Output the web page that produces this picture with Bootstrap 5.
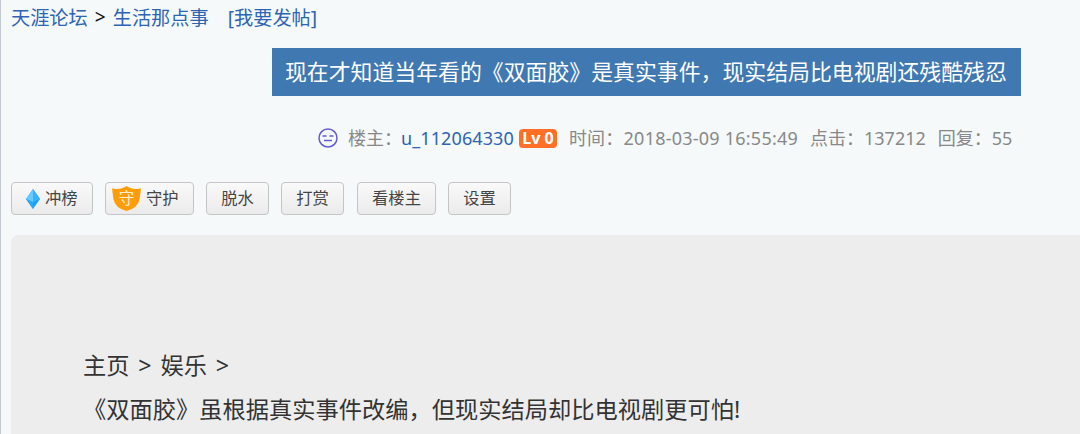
<!DOCTYPE html>
<html lang="zh-CN">
<head>
    <meta charset="UTF-8">
    <meta name="viewport" content="width=device-width, initial-scale=1.0">
    <link href="https://cdn.jsdelivr.net/npm/bootstrap@5.3.3/dist/css/bootstrap.min.css" rel="stylesheet">
    <script src="https://cdn.jsdelivr.net/npm/bootstrap@5.3.3/dist/js/bootstrap.bundle.min.js"></script>
    <title>生活那点事</title>
    <style>
        body {
            height: 434px;
            overflow: hidden;
            background: #f5f9fa;
            border-left: 1px solid #c3c9d0;
            padding-left: 10px;
            font-family: "Noto Sans", "Noto Sans CJK SC", sans-serif;
            text-spacing-trim: space-all;
            white-space: nowrap;
        }
        a { color: #2d64b3; text-decoration: none; }

        .crumbs { height: 36px; font-size: 19.2px; line-height: 35px; color: #111; }
        .crumbs .sep { width: 25px; text-align: center; font-size: 19px; }
        .crumbs .new-post { margin-left: 19px; }

        .post-title {
            width: 749px;
            height: 48px;
            margin: 12px 0 0 261px;
            padding-left: 13px;
            background: #4078b1;
            color: #fff;
            font-size: 21.88px;
            line-height: 48px;
        }

        .post-meta { height: 30px; margin: 27px 0 0 307px; font-size: 18px; color: #888; }
        .post-meta .owner { margin-left: 10px; }
        .post-meta .user-name { margin-left: -1px; letter-spacing: .1px; }
        .post-meta .level {
            width: 38px;
            height: 19px;
            margin: 0 12px 0 5px;
            border-radius: 4px;
            background: #ff6f26;
            color: #fff;
            font: bold 16px/19px "Noto Sans", sans-serif;
            text-align: center;
        }
        .post-meta .post-time { letter-spacing: .23px; }

        .tools { margin-top: 29px; }
        .btn-tool {
            --bs-btn-color: #444;
            --bs-btn-hover-color: #222;
            height: 33px;
            padding: 0;
            border: 1px solid #c3c5c6;
            border-radius: 4px;
            background: linear-gradient(#f9f9f9, #ebebeb);
            font-size: 16.3px;
            line-height: 31px;
        }

        .post-body {
            height: 220px;
            margin-top: 20px;
            padding: 109px 0 0 72px;
            background: #ededed;
            border-top-left-radius: 8px;
            color: #333;
            font-size: 23.26px;
            line-height: 43.5px;
        }
        .post-body .path { word-spacing: 2.8px; }
    </style>
</head>
<body>

    <nav class="crumbs d-flex">
        <a href="#">天涯论坛</a>
        <span class="sep">&gt;</span>
        <a href="#">生活那点事</a>
        <a href="#" class="new-post">[我要发帖]</a>
    </nav>

    <h1 class="post-title fw-normal mb-0">现在才知道当年看的《双面胶》是真实事件，现实结局比电视剧还残酷残忍</h1>

    <div class="post-meta d-flex align-items-center">
        <svg width="20" height="20" viewBox="0 0 20 20" fill="none" stroke="#625bd2" stroke-width="1.5">
            <circle cx="10" cy="10" r="9"/>
            <path d="M4.5 8h4M11.5 8h4M6 12.5h8"/>
        </svg>
        <span class="owner">楼主：</span>
        <a href="#" class="user-name">u_112064330</a>
        <span class="level">Lv 0</span>
        <span class="post-time">时间：2018-03-09 16:55:49</span>
        <span class="hits ms-2 ps-1">点击：137212</span>
        <span class="replies ms-2 ps-1">回复：55</span>
    </div>

    <div class="tools d-flex">
        <button class="btn btn-tool d-flex align-items-center" style="width: 82px; margin-right: 12px; padding-left: 14px;">
            <svg width="14" height="20" viewBox="0 0 14 20" style="margin-right: 5px;">
                <path d="M7 0L0 10l7 10 7-10z" fill="#1ca0f5"/>
                <path d="M7 0L0 10l7 3z" fill="#66c9ff"/>
                <path d="M7 0l7 10-7 3z" fill="#38b3fb"/>
                <path d="M0 10l7 3v7z" fill="#2aa9f8"/>
            </svg>冲榜
        </button>
        <button class="btn btn-tool d-flex align-items-center" style="width: 89px; margin-right: 12px; padding-left: 6px;">
            <svg width="29" height="25" viewBox="0 0 29 25">
                <path d="M0 2.5Q9 4 14.5 0 20 4 29 2.5L27.6 13Q26 22 14.5 25 3 22 1.4 13z" fill="#ff9c0a"/>
                <text x="14.5" y="18.4" text-anchor="middle" font-size="15.5" font-family="Noto Sans CJK SC, sans-serif" fill="#fff3d2">守</text>
            </svg>
            <span style="margin-left: 5px;">守护</span>
        </button>
        <button class="btn btn-tool" style="width: 63px; margin-right: 12px;">脱水</button>
        <button class="btn btn-tool" style="width: 63px; margin-right: 13px;">打赏</button>
        <button class="btn btn-tool" style="width: 79px; margin-right: 12px;">看楼主</button>
        <button class="btn btn-tool" style="width: 63px;">设置</button>
    </div>

    <div class="post-body">
        <div class="path">主页 &gt; 娱乐 &gt;</div>
        <div>《双面胶》虽根据真实事件改编，但现实结局却比电视剧更可怕!</div>
    </div>

</body>
</html>
